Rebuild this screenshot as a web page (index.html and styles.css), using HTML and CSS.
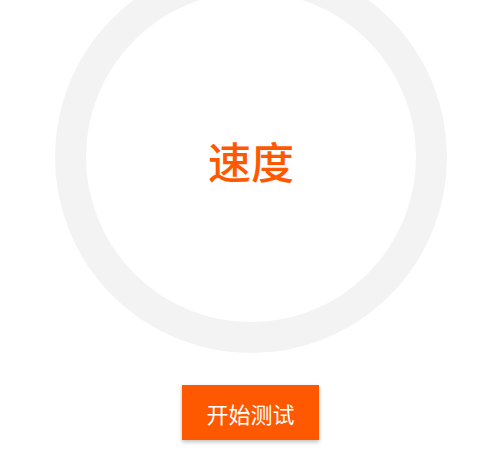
FILE: index.html
```html
<!DOCTYPE html>
<html lang="zh">
<head>
<meta charset="utf-8">
<link rel="stylesheet" href="styles.css">
</head>
<body>
<div class="page">
  <div class="ring">
    <div class="label">速度</div>
  </div>
  <button class="start">开始测试</button>
</div>
</body>
</html>
```
FILE: styles.css
```css
html, body {
  margin: 0;
  padding: 0;
  background: #ffffff;
  overflow: hidden;
}
.page {
  width: 496px;
  height: 453px;
  font-family: "Noto Sans CJK SC", "Noto Sans", sans-serif;
  display: flex;
  flex-direction: column;
  align-items: flex-start;
}
.ring {
  box-sizing: border-box;
  width: 392px;
  height: 392px;
  margin: -39px 0 0 55px;
  border: 31px solid #f3f3f3;
  border-radius: 50%;
  display: flex;
  align-items: center;
  justify-content: center;
}
.label {
  color: #fe5900;
  font-size: 43px;
  font-weight: 500;
  line-height: 1;
  margin-top: 7px;
}
.start {
  margin: 32px 0 0 182px;
  width: 137px;
  height: 55px;
  border: none;
  border-radius: 0;
  background: #fe5900;
  color: #ffffff;
  font-family: "Noto Sans CJK SC", "Noto Sans", sans-serif;
  font-size: 22px;
  padding: 0;
  box-shadow: 0 2px 4px rgba(0, 0, 0, 0.25);
}
```
